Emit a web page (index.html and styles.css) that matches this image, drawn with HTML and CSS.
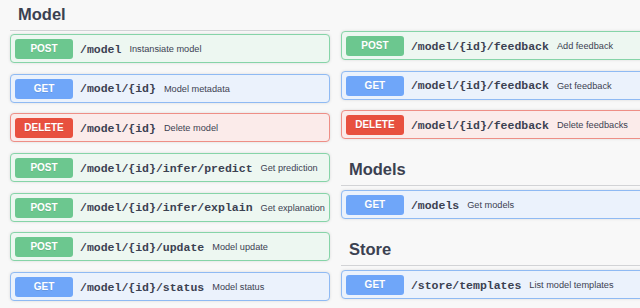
FILE: index.html
```html
<!DOCTYPE html>
<html lang="en">
  <head>
    <meta charset="UTF-8" />
    <meta name="viewport" content="width=device-width, initial-scale=1.0" />
    <title>Model API</title>
    <link rel="stylesheet" href="styles.css">
  </head>
  <body>
    <div class="column">
      <h2 class="tag">Model</h2>
      <div class="ops">
        <div class="op post">
          <span class="method">POST</span>
          <span class="path">/model</span>
          <span class="summary">Instansiate model</span>
        </div>
        <div class="op get">
          <span class="method">GET</span>
          <span class="path">/model/{id}</span>
          <span class="summary">Model metadata</span>
        </div>
        <div class="op delete">
          <span class="method">DELETE</span>
          <span class="path">/model/{id}</span>
          <span class="summary">Delete model</span>
        </div>
        <div class="op post">
          <span class="method">POST</span>
          <span class="path">/model/{id}/infer/predict</span>
          <span class="summary">Get prediction</span>
        </div>
        <div class="op post">
          <span class="method">POST</span>
          <span class="path">/model/{id}/infer/explain</span>
          <span class="summary">Get explanation</span>
        </div>
        <div class="op post">
          <span class="method">POST</span>
          <span class="path">/model/{id}/update</span>
          <span class="summary">Model update</span>
        </div>
        <div class="op get">
          <span class="method">GET</span>
          <span class="path">/model/{id}/status</span>
          <span class="summary">Model status</span>
        </div>
      </div>
    </div>

    <div class="column right">
      <div class="ops">
        <div class="op post">
          <span class="method">POST</span>
          <span class="path">/model/{id}/feedback</span>
          <span class="summary">Add feedback</span>
        </div>
        <div class="op get">
          <span class="method">GET</span>
          <span class="path">/model/{id}/feedback</span>
          <span class="summary">Get feedback</span>
        </div>
        <div class="op delete">
          <span class="method">DELETE</span>
          <span class="path">/model/{id}/feedback</span>
          <span class="summary">Delete feedbacks</span>
        </div>
      </div>

      <h2 class="tag spaced">Models</h2>
      <div class="ops">
        <div class="op get">
          <span class="method">GET</span>
          <span class="path">/models</span>
          <span class="summary">Get models</span>
        </div>
      </div>

      <h2 class="tag spaced">Store</h2>
      <div class="ops">
        <div class="op get">
          <span class="method">GET</span>
          <span class="path">/store/templates</span>
          <span class="summary">List model templates</span>
        </div>
      </div>
    </div>
  </body>
</html>
```

FILE: styles.css
```css
html,
body {
  width: 640px;
  height: 308px;
  overflow: hidden;
}

body {
  margin: 0;
  padding-left: 10px;
  display: flex;
  gap: 11px;
  background: #f8f8f8;
  font-family: "Liberation Sans", Arial, sans-serif;
  color: #3b4151;
  box-sizing: border-box;
}

.column {
  flex: 0 0 318px;
}

.right {
  padding-top: 31px;
}

.tag {
  margin: 0 0 3px;
  padding: 4px 8px 6px;
  font-size: 16.5px;
  line-height: 20px;
  font-weight: bold;
  color: #3b4151;
  border-bottom: 1px solid rgba(59, 65, 81, 0.2);
}

.tag.spaced {
  margin: 16px 0 4px;
}

.ops {
  display: flex;
  flex-direction: column;
  gap: 10.7px;
}

.op {
  display: flex;
  align-items: center;
  padding: 4px 4px 3px;
  border: 1px solid;
  border-radius: 4px;
  box-shadow: 0 0 3px rgba(0, 0, 0, 0.12);
  white-space: nowrap;
}

.method {
  flex: 0 0 58px;
  height: 20px;
  line-height: 20px;
  border-radius: 3px;
  text-align: center;
  font-size: 10px;
  font-weight: bold;
  color: #fff;
  text-shadow: 0 1px 0 rgba(0, 0, 0, 0.1);
}

.path {
  margin-left: 7px;
  font-family: "Liberation Mono", "Courier New", monospace;
  font-size: 11.5px;
  font-weight: bold;
  color: #3b4151;
}

.summary {
  margin-left: 8px;
  font-size: 9.2px;
  color: #3b4151;
}

.post {
  background: #edf7f1;
  border-color: #86d4a8;
}

.post .method {
  background: #6cc78f;
}

.get {
  background: #ebf2fc;
  border-color: #8fbaf3;
}

.get .method {
  background: #6fa6f9;
}

.delete {
  background: #fbebea;
  border-color: #ee8e86;
}

.delete .method {
  background: #e8503f;
}
```
